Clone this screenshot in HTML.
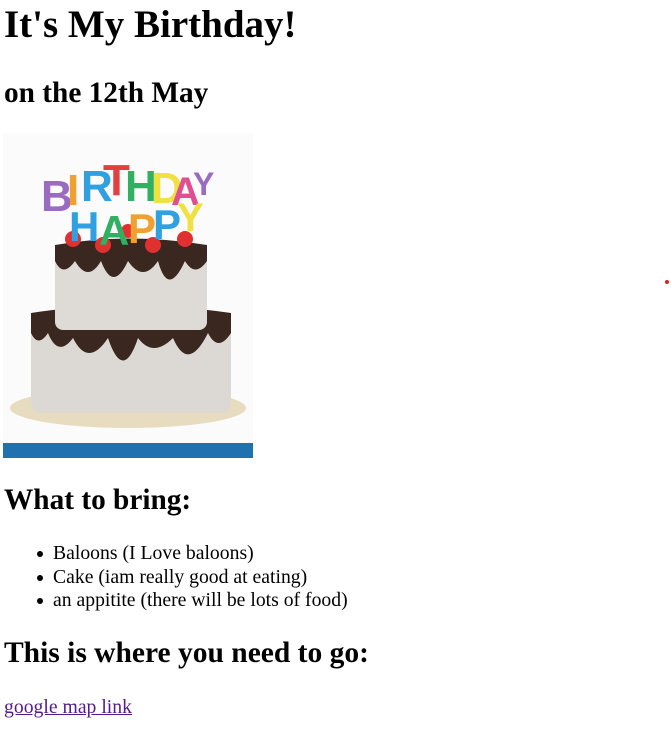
<!DOCTYPE html>
<html><head><style>
body{margin:0;width:671px;height:737px;position:relative;background:#fff;font-family:"Liberation Serif",serif;color:#000;overflow:hidden}
.a{position:absolute;white-space:nowrap;margin:0}
h1,h2{font-weight:bold}
ul{list-style:none;padding:0}
li{position:absolute;left:53px;font-size:19.7px;line-height:23px}
li:before{content:"";position:absolute;left:-16px;top:9px;width:6px;height:6px;border-radius:50%;background:#000}
</style></head><body>
<h1 class="a" style="left:4px;top:4px;font-size:39px;line-height:42px">It's My Birthday!</h1>
<h2 class="a" style="left:4px;top:77px;font-size:29.3px;line-height:32px">on the 12th May</h2>
<svg class="a" style="left:3px;top:133px" width="250" height="325" viewBox="0 0 250 325">
<rect width="250" height="325" fill="#fbfbfb"/>
<ellipse cx="125" cy="275" rx="118" ry="20" fill="#e8dcc0"/>
<rect x="28" y="180" width="200" height="100" rx="10" fill="#dcd9d4"/>
<path d="M28 180 Q125 165 228 180 L228 200 Q215 220 205 200 Q185 240 170 205 Q150 225 135 205 Q120 250 105 205 Q85 235 70 205 Q55 225 45 200 Q35 215 28 200Z" fill="#3a2820"/>
<rect x="52" y="112" width="152" height="85" rx="8" fill="#dedbd6"/>
<path d="M52 112 Q125 99 204 112 L204 128 Q192 145 182 128 Q165 165 155 128 Q140 150 125 128 Q110 160 98 128 Q85 150 72 128 Q60 145 52 128Z" fill="#3a2820"/>
<g fill="#e03030"><circle cx="70" cy="106" r="8"/><circle cx="100" cy="112" r="8"/><circle cx="150" cy="112" r="8"/><circle cx="182" cy="106" r="8"/><circle cx="125" cy="98" r="7"/></g>
<text x="38" y="78" font-family="Liberation Sans" font-weight="bold" font-size="44" fill="#9b6bc0">B</text>
<text x="64" y="72" font-family="Liberation Sans" font-weight="bold" font-size="44" fill="#f0a030">I</text>
<text x="78" y="68" font-family="Liberation Sans" font-weight="bold" font-size="44" fill="#30a0e0">R</text>
<text x="100" y="62" font-family="Liberation Sans" font-weight="bold" font-size="44" fill="#e04040">T</text>
<text x="122" y="68" font-family="Liberation Sans" font-weight="bold" font-size="44" fill="#30b060">H</text>
<text x="148" y="70" font-family="Liberation Sans" font-weight="bold" font-size="44" fill="#f0e040">D</text>
<text x="168" y="72" font-family="Liberation Sans" font-weight="bold" font-size="40" fill="#e05090">A</text>
<text x="190" y="62" font-family="Liberation Sans" font-weight="bold" font-size="32" fill="#9b6bc0">Y</text>
<text x="66" y="108" font-family="Liberation Sans" font-weight="bold" font-size="42" fill="#30a0e0">H</text>
<text x="96" y="112" font-family="Liberation Sans" font-weight="bold" font-size="42" fill="#30b060">A</text>
<text x="125" y="110" font-family="Liberation Sans" font-weight="bold" font-size="42" fill="#f0a030">P</text>
<text x="150" y="106" font-family="Liberation Sans" font-weight="bold" font-size="42" fill="#30a0e0">P</text>
<text x="174" y="98" font-family="Liberation Sans" font-weight="bold" font-size="40" fill="#f0e040">Y</text>
<rect x="0" y="310" width="250" height="15" fill="#1f72ad"/>
</svg>
<h2 class="a" style="left:4px;top:484px;font-size:29.3px;line-height:32px">What to bring:</h2>
<ul class="a" style="left:0;top:0;margin:0">
<li style="top:542px">Baloons (I Love baloons)</li>
<li style="top:566px">Cake (iam really good at eating)</li>
<li style="top:589px">an appitite (there will be lots of food)</li>
</ul>
<h2 class="a" style="left:4px;top:637px;font-size:29.5px;line-height:32px">This is where you need to go:</h2>
<a class="a" style="left:4px;top:696px;font-size:19.7px;line-height:23px;color:#551a8b;text-decoration:underline">google map link</a>
<div class="a" style="left:665px;top:280px;width:4px;height:4px;border-radius:50%;background:#e02020"></div>
</body></html>
